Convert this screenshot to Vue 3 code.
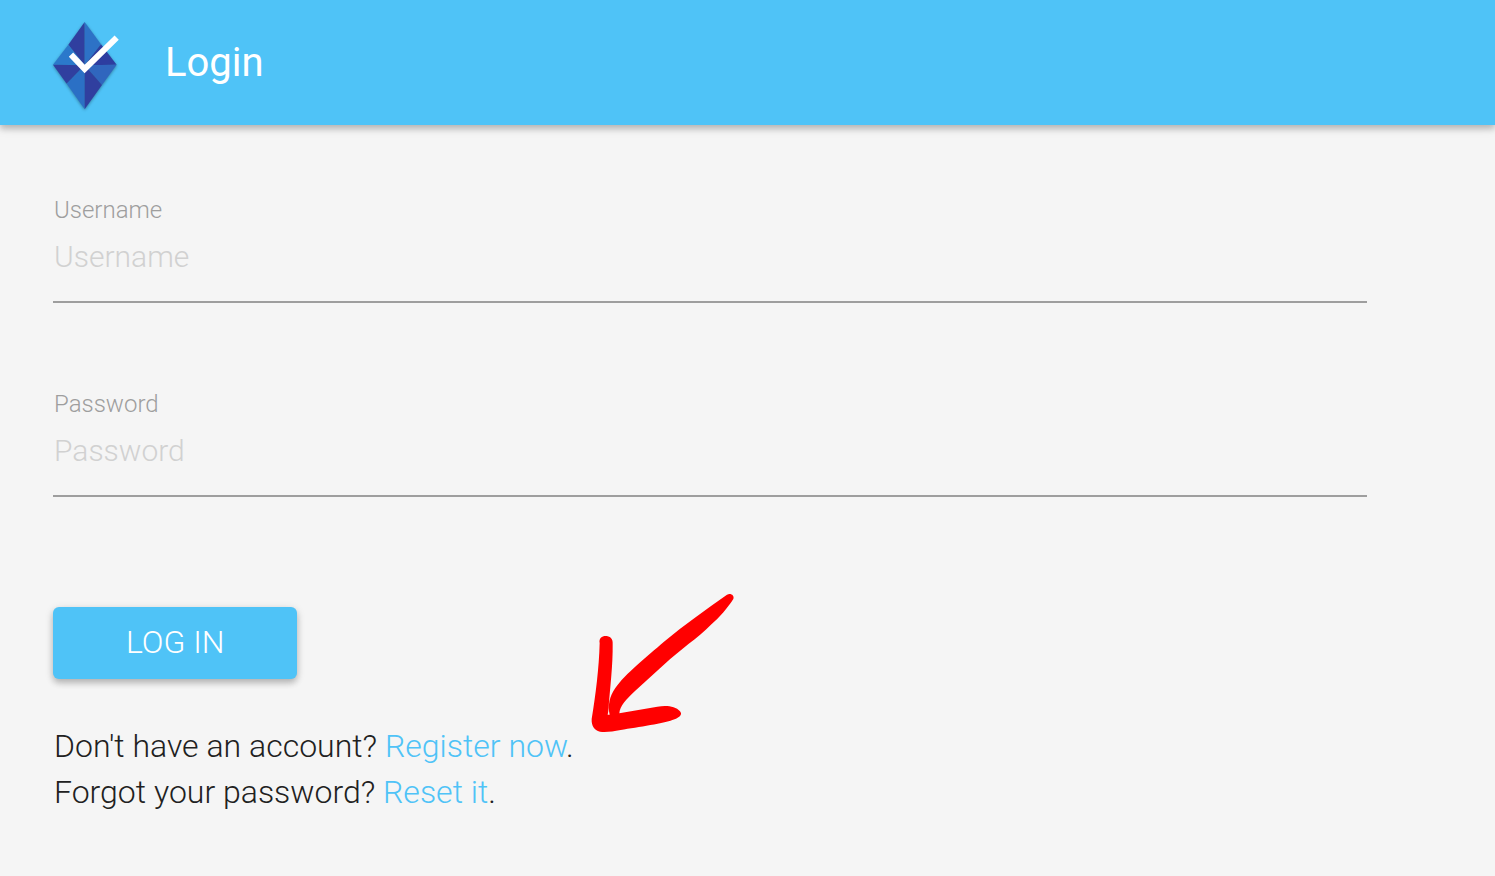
<script setup>
import { ref } from 'vue'

const username = ref('')
const password = ref('')
</script>

<template>
  <div class="page">
    <header class="bar">
      <svg class="logo" viewBox="0 0 204 276" aria-hidden="true">
        <g class="gem">
          <path fill="#303f9f" d="M98 6 49 74 98 136Z" />
          <path fill="#2b79cb" d="M49 74 3 134 98 136Z" />
          <path fill="#2d72c6" d="M98 6 147 73 98 136Z" />
          <path fill="#2d3da0" d="M147 73 194 134 98 136Z" />
          <path fill="#303f9f" d="M3 134 98 136 44 191Z" />
          <path fill="#2b70c5" d="M44 191 98 136 98 268Z" />
          <path fill="#3066be" d="M98 136 194 134 150 195Z" />
          <path fill="#303f9f" d="M98 136 150 195 98 268Z" />
        </g>
        <path class="check" d="M57 104 98 147 194 53" />
      </svg>
      <h1>Login</h1>
    </header>

    <main class="content">
      <form @submit.prevent>
        <div class="field">
          <label for="username">Username</label>
          <input id="username" v-model="username" type="text" placeholder="Username" />
        </div>
        <div class="field">
          <label for="password">Password</label>
          <input id="password" v-model="password" type="password" placeholder="Password" />
        </div>
        <button type="submit">LOG IN</button>
      </form>

      <div class="help">
        <p>
          Don't have an account? <a href="#register">Register now</a>.
          <svg class="arrow" viewBox="0 0 495 465" aria-hidden="true">
            <path d="M441 29C452 23 464 31 460 42C440 72 422 94 392 120C355 158 300 194 254 237L165 318C139 342 119 364 118 385L232 365C260 361 286 363 300 379C308 389 300 396 286 402C252 416 175 426 122 435C98 440 76 442 60 440C42 436 34 422 35 402C47 330 57 250 59 174C56 159 67 152 79 153C91 154 99 162 98 176C99 240 90 308 85 378L83 389H89C83 363 88 334 106 309C135 267 201 214 252 170C315 118 379 72 441 29Z" />
          </svg>
        </p>
        <p>Forgot your password? <a href="#reset">Reset it</a>.</p>
      </div>
    </main>
  </div>
</template>

<style>
body {
  background: #f5f5f5;
}
</style>

<style scoped>
.page {
  min-height: 100vh;
  font-family: Roboto, sans-serif;
  font-weight: 300;
  color: #212121;
}

.bar {
  display: flex;
  align-items: center;
  gap: 45px;
  box-sizing: border-box;
  height: 125px;
  padding: 6px 52px 0;
  background: #4fc3f7;
  box-shadow: 0 4px 6px rgba(0, 0, 0, 0.2), 0 2px 12px rgba(0, 0, 0, 0.1);
}

.logo {
  width: 68px;
  height: 92px;
  overflow: visible;
}

.gem {
  filter: drop-shadow(0 3px 4px rgba(0, 0, 0, 0.35));
}

.check {
  fill: none;
  stroke: #fff;
  stroke-width: 18;
}

h1 {
  margin: 0;
  padding-bottom: 6px;
  font-size: 40px;
  line-height: 48px;
  font-weight: 400;
  color: #fff;
}

.content {
  padding: 69px 128px 60px 53px;
}

.field {
  display: flex;
  flex-direction: column;
  margin-bottom: 85px;
}

label {
  padding-left: 1px;
  font-size: 24px;
  line-height: 32px;
  color: #9e9e9e;
}

input {
  box-sizing: border-box;
  width: 100%;
  height: 77px;
  margin: 0;
  padding: 0 1px 15px;
  border: 0;
  border-bottom: 2px solid #9e9e9e;
  border-radius: 0;
  outline: 0;
  background: transparent;
  font: inherit;
  font-size: 30px;
  color: inherit;
}

input::placeholder {
  color: #d1d1d1;
  opacity: 1;
}

button {
  display: block;
  height: 72px;
  margin: 110px 0 0;
  padding: 0 73px 2px;
  border: 0;
  border-radius: 6px;
  background: #4fc3f7;
  box-shadow: 0 4px 6px rgba(0, 0, 0, 0.2), 0 2px 10px rgba(0, 0, 0, 0.12);
  font: inherit;
  font-size: 32px;
  color: #fff;
  cursor: pointer;
}

.help {
  margin-top: 44px;
  padding-left: 1px;
}

p {
  position: relative;
  width: fit-content;
  margin: 0;
  font-size: 32px;
  line-height: 46px;
}

a {
  color: #4fc3f7;
  text-decoration: none;
}

.arrow {
  position: absolute;
  left: calc(100% + 6px);
  bottom: 29px;
  width: 165px;
  height: 155px;
  fill: #f00;
  pointer-events: none;
}
</style>
